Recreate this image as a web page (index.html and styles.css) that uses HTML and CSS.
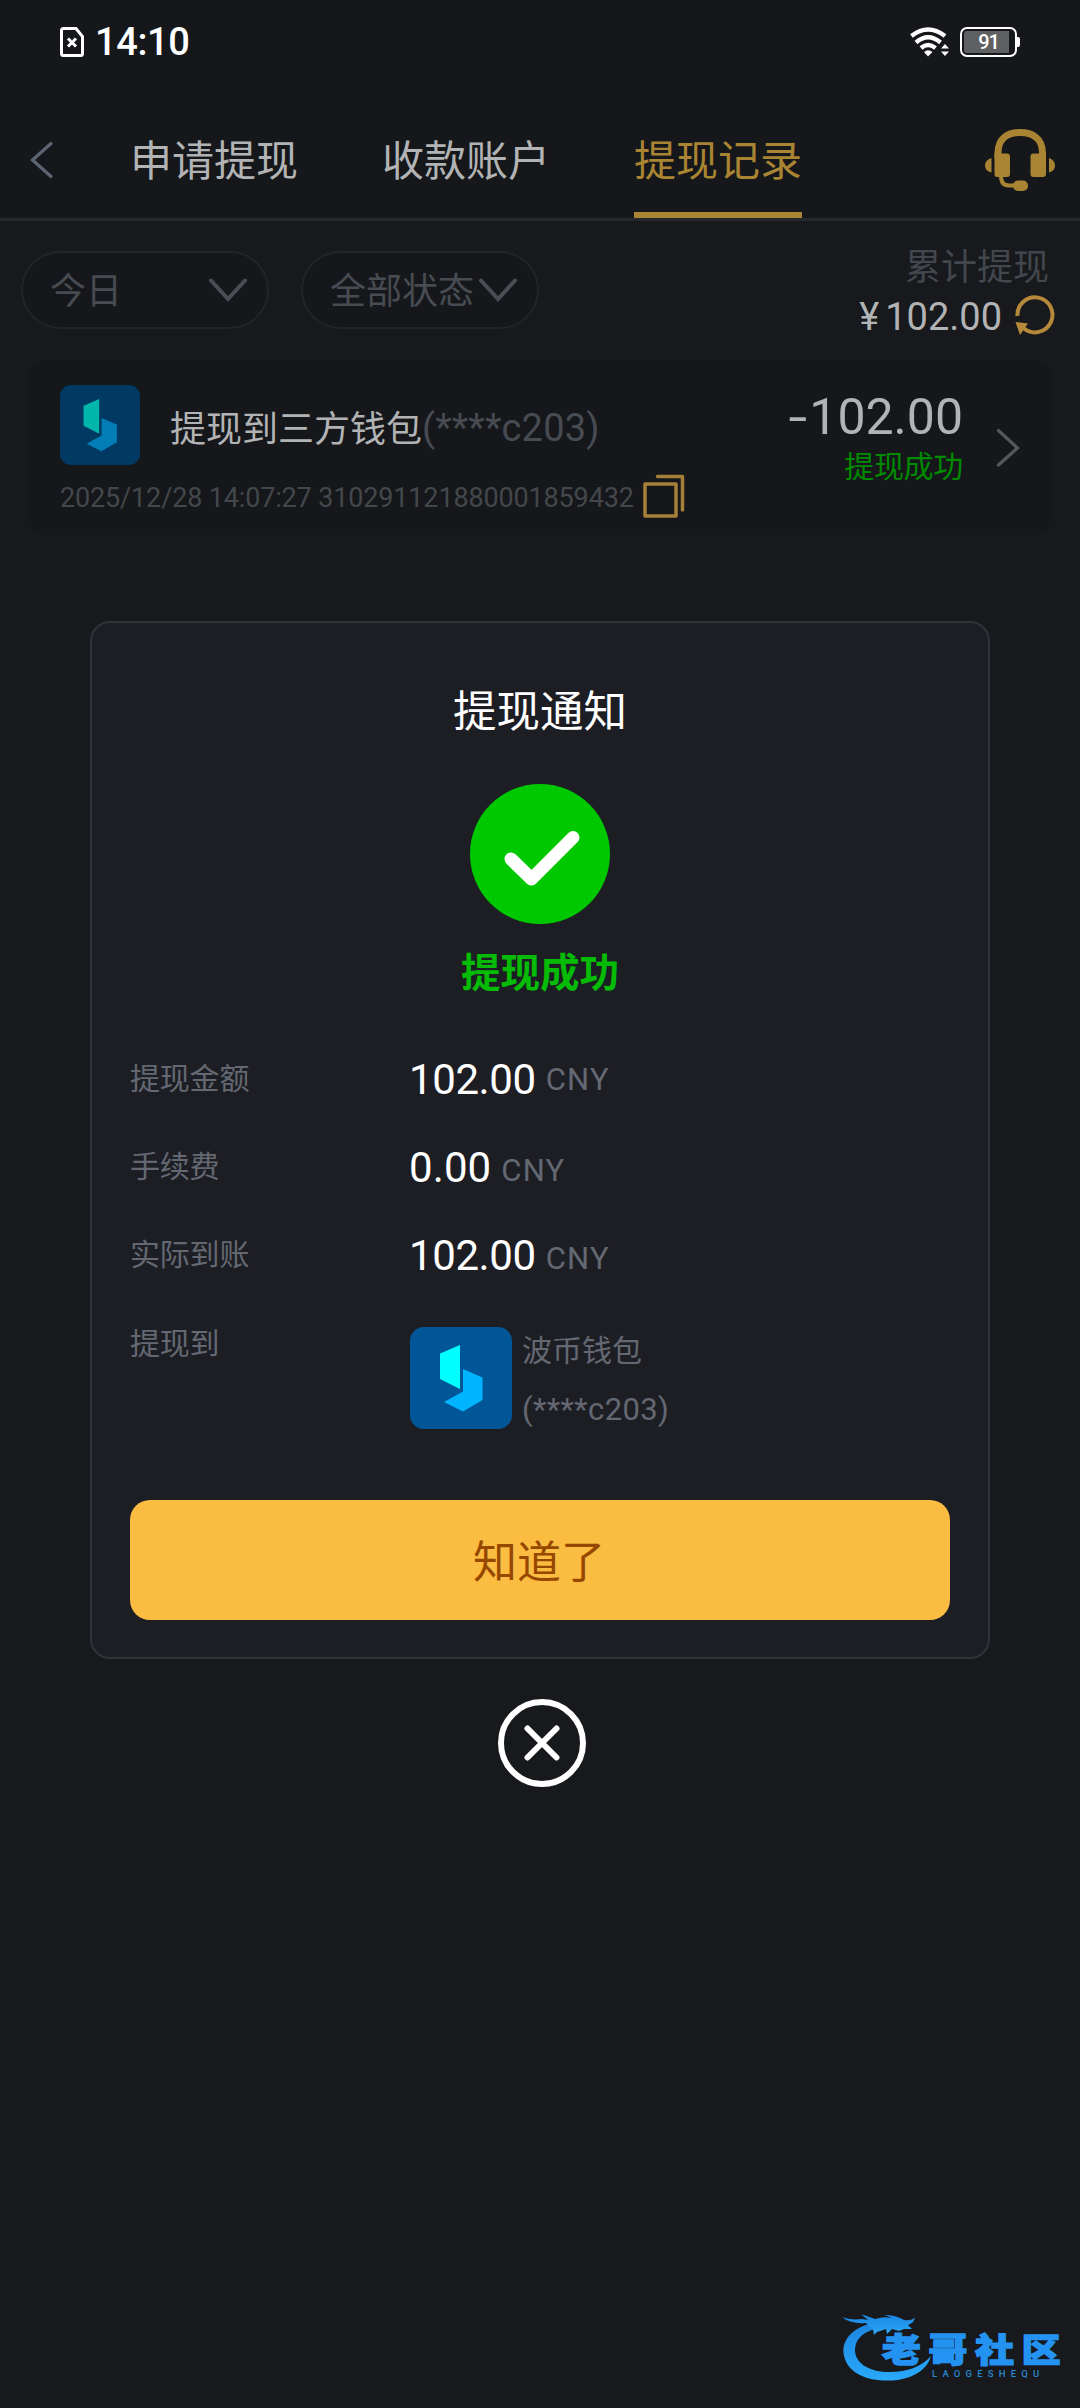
FILE: index.html
```html
<!DOCTYPE html>
<html lang="zh-CN">
<head>
<meta charset="UTF-8">
<meta name="viewport" content="width=device-width, initial-scale=1.0">
<title>提现记录</title>
<link rel="stylesheet" href="styles.css">
</head>
<body>

<div class="status-bar">
    <svg class="sim" width="24" height="30" viewBox="0 0 24 30" fill="none" stroke="#fff">
        <path d="M3.5 1.5H16L22.5 9.5V26.5Q22.5 28.5 20.5 28.5H3.5Q1.5 28.5 1.5 26.5V3.5Q1.5 1.5 3.5 1.5Z" stroke-width="3"/>
        <path d="M8 11.5L16 19.5M16 11.5L8 19.5" stroke-width="3"/>
    </svg>
    <span class="time">14:10</span>
    <svg class="wifi" width="40" height="30" viewBox="0 0 40 30" fill="none" stroke="#fff" stroke-width="4.4">
        <path d="M1.5 9Q18 -4 35 9"/>
        <path d="M6 15.5Q18 5 30.5 15.5"/>
        <path d="M11 21Q18 15 25.5 21"/>
        <path d="M14 25Q18 21.5 22.5 25L18 29.5Z" fill="#fff" stroke="none"/>
        <path d="M31 21.5L35 17L39 21.5ZM31 24.5L35 29L39 24.5Z" fill="#fff" stroke="none"/>
    </svg>
    <div class="battery"><div class="level"></div><span>91</span></div>
</div>

<div class="navbar">
    <svg class="back" width="24" height="40" viewBox="0 0 24 40" fill="none" stroke="#5b6571" stroke-width="3.2" stroke-linecap="round">
        <path d="M21 3.5L2.5 20L21 36.5"/>
    </svg>
    <div class="tabs">
        <a class="tab">申请提现</a>
        <a class="tab">收款账户</a>
        <a class="tab active">提现记录</a>
    </div>
    <svg class="service" width="70" height="62" viewBox="0 0 70 62" fill="#a98432">
        <path d="M13 30V24C13 9 23 3.5 35 3.5S57.5 9 57.5 24V30" fill="none" stroke="#a98432" stroke-width="7"/>
        <path d="M9.5 24.5H22Q25 24.5 25 27.5V45Q25 48 22 48H12Q9.5 48 9.5 45Z"/>
        <path d="M61 24.5H48.5Q45.5 24.5 45.5 27.5V45Q45.5 48 48.5 48H58Q61 48 61 45Z"/>
        <path d="M6.5 29V43.5Q0 42 0 36.5T6.5 29ZM64 29V43.5Q70 42 70 36.5T64 29Z"/>
        <path d="M16 47Q16 56.5 24 56.5H31" fill="none" stroke="#a98432" stroke-width="4"/>
        <rect x="28" y="51.5" width="15" height="10.5" rx="5"/>
    </svg>
</div>

<div class="filters">
    <div class="select date"><span>今日</span>
        <svg width="38" height="24" viewBox="0 0 38 24"><path d="M2 2.5L19 21L36 2.5"/></svg>
    </div>
    <div class="select state"><span>全部状态</span>
        <svg width="38" height="24" viewBox="0 0 38 24"><path d="M2 2.5L19 21L36 2.5"/></svg>
    </div>
    <div class="total">
        <div class="total-label">累计提现</div>
        <div class="total-value">
            <span class="yen">¥</span><span class="sum">102.00</span>
            <svg width="40" height="40" viewBox="0 0 40 40">
                <path d="M2.5 21A17.5 17.5 0 1 1 9 33.5" fill="none" stroke="#b5893a" stroke-width="4"/>
                <path d="M0.5 27L13 28.5L5 40Z" fill="#b5893a"/>
            </svg>
        </div>
    </div>
</div>

<div class="record">
    <div class="record-main">
        <div class="record-title">
            <svg class="wallet small" viewBox="0 0 102 102">
                <rect width="102" height="102" rx="14" fill="#003a63"/>
                <path d="M30 26.5L50 18V62L30 52Z" fill="#00b5aa"/>
                <path d="M53 42L72.5 50.5V73L53 84.5L34 75L53 64.5Z" fill="#007eb5"/>
            </svg>
            <span class="name">提现到三方钱包</span><span class="account">(****c203)</span>
        </div>
        <div class="record-info">
            <span class="info">2025/12/28 14:07:27 310291121880001859432</span>
            <svg width="42" height="44" viewBox="0 0 42 44" fill="none" stroke="#a5803a" stroke-width="3.5" stroke-linejoin="round" stroke-linecap="round">
                <rect x="2" y="10" width="31" height="32"/>
                <path d="M14.5 2.5H39.5V36"/>
            </svg>
        </div>
    </div>
    <div class="record-amount">
        <div class="amount"><span class="minus">-</span>102.00</div>
        <div class="state-ok">提现成功</div>
    </div>
    <svg class="arrow" width="24" height="40" viewBox="0 0 24 40" fill="none" stroke="#54585d" stroke-width="3.2" stroke-linecap="round">
        <path d="M2.5 2.5L21.5 20L2.5 37"/>
    </svg>
</div>

<div class="overlay">
    <div class="dialog">
        <h2>提现通知</h2>
        <svg class="check" width="140" height="140" viewBox="0 0 140 140">
            <circle cx="70" cy="70" r="70" fill="#00c800"/>
            <path d="M41 75L61.5 95L103 53.5" fill="none" stroke="#fff" stroke-width="13" stroke-linecap="round" stroke-linejoin="round"/>
        </svg>
        <div class="result">提现成功</div>
        <div class="rows">
            <div class="row"><label>提现金额</label><b>102.00</b><i class="raised">CNY</i></div>
            <div class="row"><label>手续费</label><b class="fee">0.00</b><i>CNY</i></div>
            <div class="row"><label>实际到账</label><b>102.00</b><i>CNY</i></div>
            <div class="row target"><label>提现到</label>
                <svg class="wallet" viewBox="0 0 102 102">
                    <rect width="102" height="102" rx="14" fill="#005696"/>
                    <path d="M30 26.5L50 18V62L30 52Z" fill="#00ffff"/>
                    <path d="M53 42L72.5 50.5V73L53 84.5L34 75L53 64.5Z" fill="#00b4ff"/>
                </svg>
                <div class="wallet-name">
                    <div>波币钱包</div>
                    <div class="masked">(****c203)</div>
                </div>
            </div>
        </div>
        <button type="button">知道了</button>
    </div>
    <svg class="close" width="88" height="88" viewBox="0 0 88 88" fill="none" stroke="#fff" stroke-width="6" stroke-linecap="round">
        <circle cx="44" cy="44" r="41"/>
        <path d="M29.5 29.5L58.5 58.5M58.5 29.5L29.5 58.5"/>
    </svg>
</div>

<div class="watermark">
    <svg width="90" height="78" viewBox="0 0 90 78">
        <defs>
            <linearGradient id="wm" x1="0" y1="0" x2="0" y2="1">
                <stop offset="0" stop-color="#1b85e0"/>
                <stop offset="1" stop-color="#2aa9fa"/>
            </linearGradient>
        </defs>
        <path d="M32 17C8 21 -3 38 3 53C8 69 30 77 56 74C74 71 86 62 89 50C80 61 62 67 44 66C25 65 13 56 13 44C13 34 20 26 34 23Z" fill="url(#wm)"/>
        <path d="M0 11Q8 14.500 20 13L26 14L19 8L33 13Q42 10 50 12Q46 10 42 9Q54 9 62 14Q68 15 73 12Q72 17 66 19L70 23L62 23L57 25L50 23L45 28L44 23L35 26L32 29L31 23L24 17Q8 18 0 11Z" fill="url(#wm)"/>
    </svg>
    <div class="wm-text">
        <div class="wm-cn">老哥社区</div>
        <div class="wm-en">LAOGESHEQU</div>
    </div>
</div>

</body>
</html>
```
FILE: styles.css
```css
* {
    box-sizing: border-box;
}

body {
    margin: 0;
    height: 2408px;
    overflow: hidden;
    background-color: #17191c;
    font-family: Roboto, "Noto Sans CJK SC", sans-serif;
    color: #b2b3b4;
}

svg {
    display: block;
    flex: none;
}

/* status bar */
.status-bar {
    display: flex;
    align-items: center;
    height: 84px;
    padding: 0 63px 0 60px;
    background-color: #15171a;
    color: #fff;
}

.time {
    margin-left: 11px;
    font-size: 38px;
    font-weight: 500;
    line-height: 50px;
    letter-spacing: -0.4px;
}

.wifi {
    margin-left: auto;
    margin-right: 10px;
}

.battery {
    position: relative;
    width: 57px;
    height: 30px;
    border: 2px solid #fff;
    border-radius: 7px;
    padding: 2px;
}

.battery::after {
    content: "";
    position: absolute;
    right: -5px;
    top: 8px;
    width: 3px;
    height: 10px;
    border-radius: 0 2px 2px 0;
    background-color: #fff;
}

.level {
    width: 45px;
    height: 22px;
    border-radius: 3px 0 0 3px;
    background-color: #5f6062;
}

.battery span {
    position: absolute;
    inset: 0;
    text-align: center;
    font-size: 20px;
    font-weight: 500;
    line-height: 27px;
    letter-spacing: -1px;
}

/* navbar */
.navbar {
    display: flex;
    align-items: flex-start;
    height: 137px;
    padding: 0 25px 0 30px;
    background-color: #15171a;
    border-bottom: 3px solid #25272c;
}

.back {
    margin-top: 56px;
}

.tabs {
    display: flex;
    gap: 84px;
    margin-left: 76px;
}

.tab {
    height: 134px;
    padding-top: 46px;
    font-size: 42px;
    line-height: 64px;
}

.tab.active {
    color: #a98432;
    border-bottom: 6px solid #a98432;
}

.service {
    margin-top: 45px;
    margin-left: auto;
}

/* filters */
.filters {
    display: flex;
    align-items: flex-start;
    height: 139px;
    padding: 30px 25px 0 21px;
}

.select {
    display: flex;
    align-items: center;
    justify-content: space-between;
    height: 78px;
    padding: 0 20px 0 27px;
    border: 2px solid #212429;
    border-radius: 39px;
    background-color: #15171a;
    color: #474b52;
    font-size: 36px;
    line-height: 54px;
}

.select span {
    padding-top: 4px;
}

.select svg {
    fill: none;
    stroke: #4a4e54;
    stroke-width: 4;
    stroke-linecap: round;
}

.date {
    width: 248px;
}

.state {
    width: 238px;
    margin-left: 32px;
}

.total {
    margin-left: auto;
}

.total-label {
    margin-top: -7px;
    margin-right: 6px;
    text-align: right;
    color: #42464d;
    font-size: 36px;
    line-height: 48px;
}

.total-value {
    display: flex;
    align-items: center;
    height: 46px;
    font-size: 38px;
    color: #b2b3b4;
}

.yen {
    margin-right: 6px;
    padding-top: 4px;
}

.sum {
    margin-right: 13px;
    padding-top: 4px;
}

/* record card */
.record {
    display: flex;
    height: 175px;
    margin: 0 30px;
    padding: 25px 30px 0;
    border-radius: 16px;
    background-color: #15171a;
}

.record-title {
    display: flex;
    align-items: center;
    height: 80px;
    font-size: 36px;
}

.small {
    margin-right: 30px;
}

.name {
    margin-top: 1px;
}

.account {
    margin-top: 6px;
    color: #474b52;
    font-size: 38px;
    letter-spacing: 0.2px;
}

.record-info {
    display: flex;
    align-items: center;
    height: 60px;
    font-size: 27px;
    letter-spacing: -0.15px;
    color: #43474b;
}

.info {
    padding-top: 5px;
}

.record-info svg {
    margin-left: 9px;
    margin-top: 2px;
}

.record-amount {
    margin-left: auto;
    text-align: right;
}

.amount {
    font-size: 50px;
    line-height: 64px;
}

.minus {
    display: inline-block;
    margin-right: 4px;
    transform: scaleX(1.35);
}

.state-ok {
    padding-top: 1px;
    font-size: 30px;
    line-height: 34px;
    letter-spacing: -0.3px;
    color: #008a00;
}

.arrow {
    margin: 43px 0 0 33px;
}

/* dialog */
.overlay {
    position: absolute;
    top: 621px;
    left: 0;
    width: 1080px;
    display: flex;
    flex-direction: column;
    align-items: center;
}

.dialog {
    display: flex;
    flex-direction: column;
    align-items: center;
    width: 900px;
    height: 1038px;
    border: 2px solid #303238;
    border-radius: 20px;
    background-color: #1d1e24;
}

.dialog h2 {
    margin: 59px 0 0;
    color: #fff;
    font-size: 43.5px;
    font-weight: 400;
    line-height: 62px;
}

.check {
    margin-top: 40px;
}

.result {
    margin-top: 20px;
    color: #05bb05;
    font-size: 39.5px;
    font-weight: 700;
    line-height: 60px;
}

.rows {
    width: 820px;
    margin-top: 31px;
}

.row {
    display: flex;
    align-items: center;
    height: 88px;
    color: #646872;
    font-size: 30px;
}

.row label {
    width: 279px;
    margin-top: -6px;
    letter-spacing: -0.2px;
}

.row b {
    color: #fff;
    font-size: 42px;
    font-weight: 400;
    letter-spacing: -0.4px;
}

.row .fee {
    letter-spacing: 0.1px;
}

.row i {
    margin-top: 6px;
    margin-left: 10px;
    font-size: 31px;
    font-style: normal;
    letter-spacing: 1.2px;
}

.row .raised {
    margin-top: 0;
}

.target {
    align-items: flex-start;
    height: 201px;
    padding-top: 28px;
}

.row.target label {
    width: 280px;
    margin-top: -1px;
    line-height: 36px;
}

.wallet {
    width: 102px;
    height: 102px;
}

.wallet.small {
    width: 80px;
    height: 80px;
}

.wallet-name {
    margin: -6px 0 0 10px;
    line-height: 60px;
}

.masked {
    font-size: 31px;
    line-height: 57px;
    letter-spacing: 0.4px;
}

.dialog button {
    width: 820px;
    height: 120px;
    padding: 0 2px 2px 0;
    border: none;
    border-radius: 20px;
    background-color: #fbbc42;
    color: #964800;
    font-family: inherit;
    font-size: 44px;
}

.close {
    margin: 40px 0 0 4px;
}

/* watermark */
.watermark {
    position: absolute;
    left: 842px;
    top: 2306px;
    display: flex;
}

.wm-text {
    margin: 27px 0 0 -50px;
}

.wm-cn {
    color: #2492f0;
    font-size: 32px;
    font-weight: 900;
    line-height: 36px;
    letter-spacing: 6.5px;
    -webkit-text-stroke: 1.5px #2492f0;
    transform: scale(1.21, 1.03);
    transform-origin: left;
}

.wm-en {
    margin-left: 50px;
    font-size: 9.5px;
    font-weight: 500;
    line-height: 9px;
    letter-spacing: 5.2px;
    color: #2a88d0;
}
```
